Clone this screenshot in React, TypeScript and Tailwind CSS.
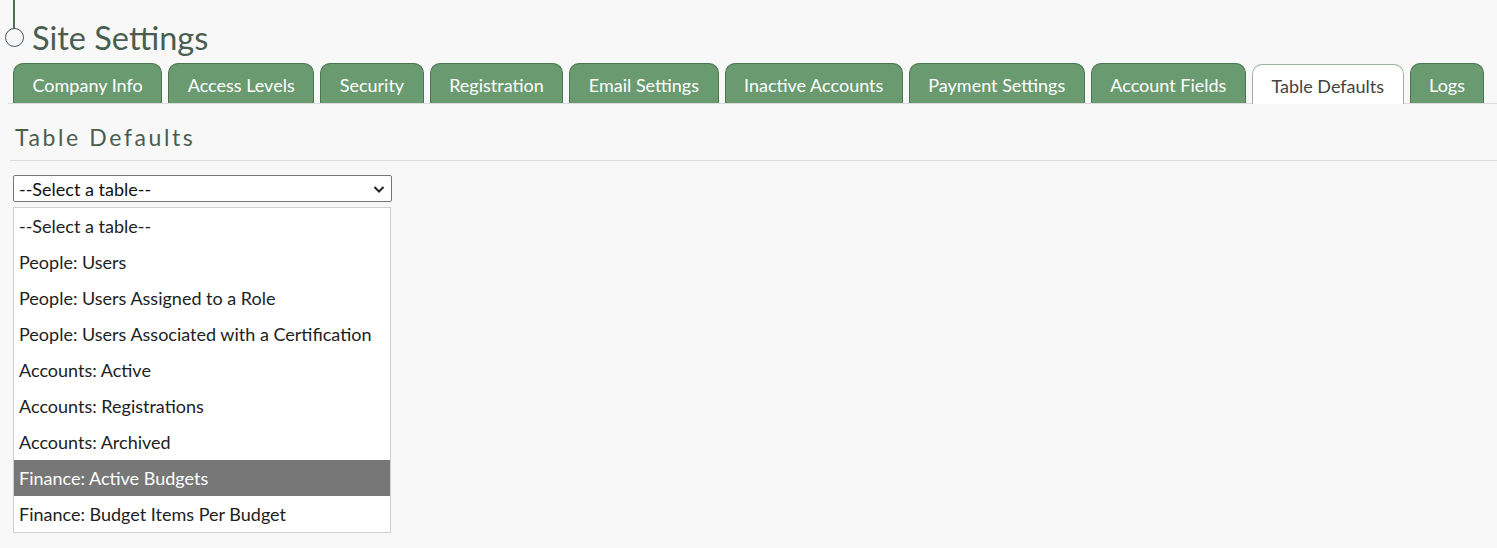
import React from "react";

const tabs = [
  "Company Info",
  "Access Levels",
  "Security",
  "Registration",
  "Email Settings",
  "Inactive Accounts",
  "Payment Settings",
  "Account Fields",
  "Table Defaults",
  "Logs",
];

const options = [
  "--Select a table--",
  "People: Users",
  "People: Users Assigned to a Role",
  "People: Users Associated with a Certification",
  "Accounts: Active",
  "Accounts: Registrations",
  "Accounts: Archived",
  "Finance: Active Budgets",
  "Finance: Budget Items Per Budget",
];

export default function App() {
  return (
    <div
      className="w-[1497px] h-[548px] bg-[#f8f8f8] overflow-hidden"
      style={{ fontFamily: "Lato, 'Liberation Sans', sans-serif" }}
    >
      <div className="h-[58px] flex items-start">
        <div className="w-[28px] flex flex-col items-center">
          <div className="w-[2px] h-[29px] bg-[#4f6d51]" />
          <div className="w-[19px] h-[19px] mt-[-1px] rounded-full border-[1.5px] border-[#3d5566]" />
        </div>
        <div className="ml-[4px] mt-[18px] text-[32.5px] leading-[40px] text-[#4a5e50]">
          Site Settings
        </div>
      </div>
      <div className="ml-[8px] border-b border-[#dcdcdc] flex items-end gap-[6px] pl-[5px] h-[46px]">
        {tabs.map((t) => {
          const active = t === "Table Defaults";
          return (
            <div
              key={t}
              className={
                active
                  ? "h-[40px] px-[18.5px] pt-[3px] flex items-center rounded-t-[10px] border border-b-0 border-[#9bb59d] bg-white text-[#444] text-[18px] mb-[-1px]"
                  : "h-[40px] px-[18.5px] pt-[3px] flex items-center rounded-t-[10px] border border-b-0 border-[#4c7551] bg-[#6a9a6f] text-white text-[18px]"
              }
            >
              {t}
            </div>
          );
        })}
      </div>
      <div className="ml-[10px]">
        <div className="h-[57px] flex items-center pt-[10px] pl-[5px] border-b border-[#dcdcdc] text-[23px] tracking-[2.6px] text-[#4a5e50]">
          Table Defaults
        </div>
        <div className="pl-[3px] pt-[14px]">
          <div className="w-[379px] h-[27px] bg-white border border-[#767676] rounded-[2px] flex items-center justify-between pl-[5px] pr-[5px] pt-[1px] text-[18px] text-[#111]">
            <span>--Select a table--</span>
            <svg width="14" height="14" viewBox="0 0 14 14">
              <path d="M2.5 5 L7 9.5 L11.5 5" fill="none" stroke="#222" strokeWidth="2" />
            </svg>
          </div>
          <div className="mt-[5px] w-[378px] bg-white border border-[#cfcfcf] flex flex-col">
            {options.map((o) => {
              const sel = o === "Finance: Active Budgets";
              return (
                <div
                  key={o}
                  className={
                    sel
                      ? "h-[36px] flex items-center pl-[5px] pt-[1px] bg-[#777777] text-white text-[18px]"
                      : "h-[36px] flex items-center pl-[5px] pt-[1px] text-[#222] text-[18px]"
                  }
                >
                  {o}
                </div>
              );
            })}
          </div>
        </div>
      </div>
    </div>
  );
}
